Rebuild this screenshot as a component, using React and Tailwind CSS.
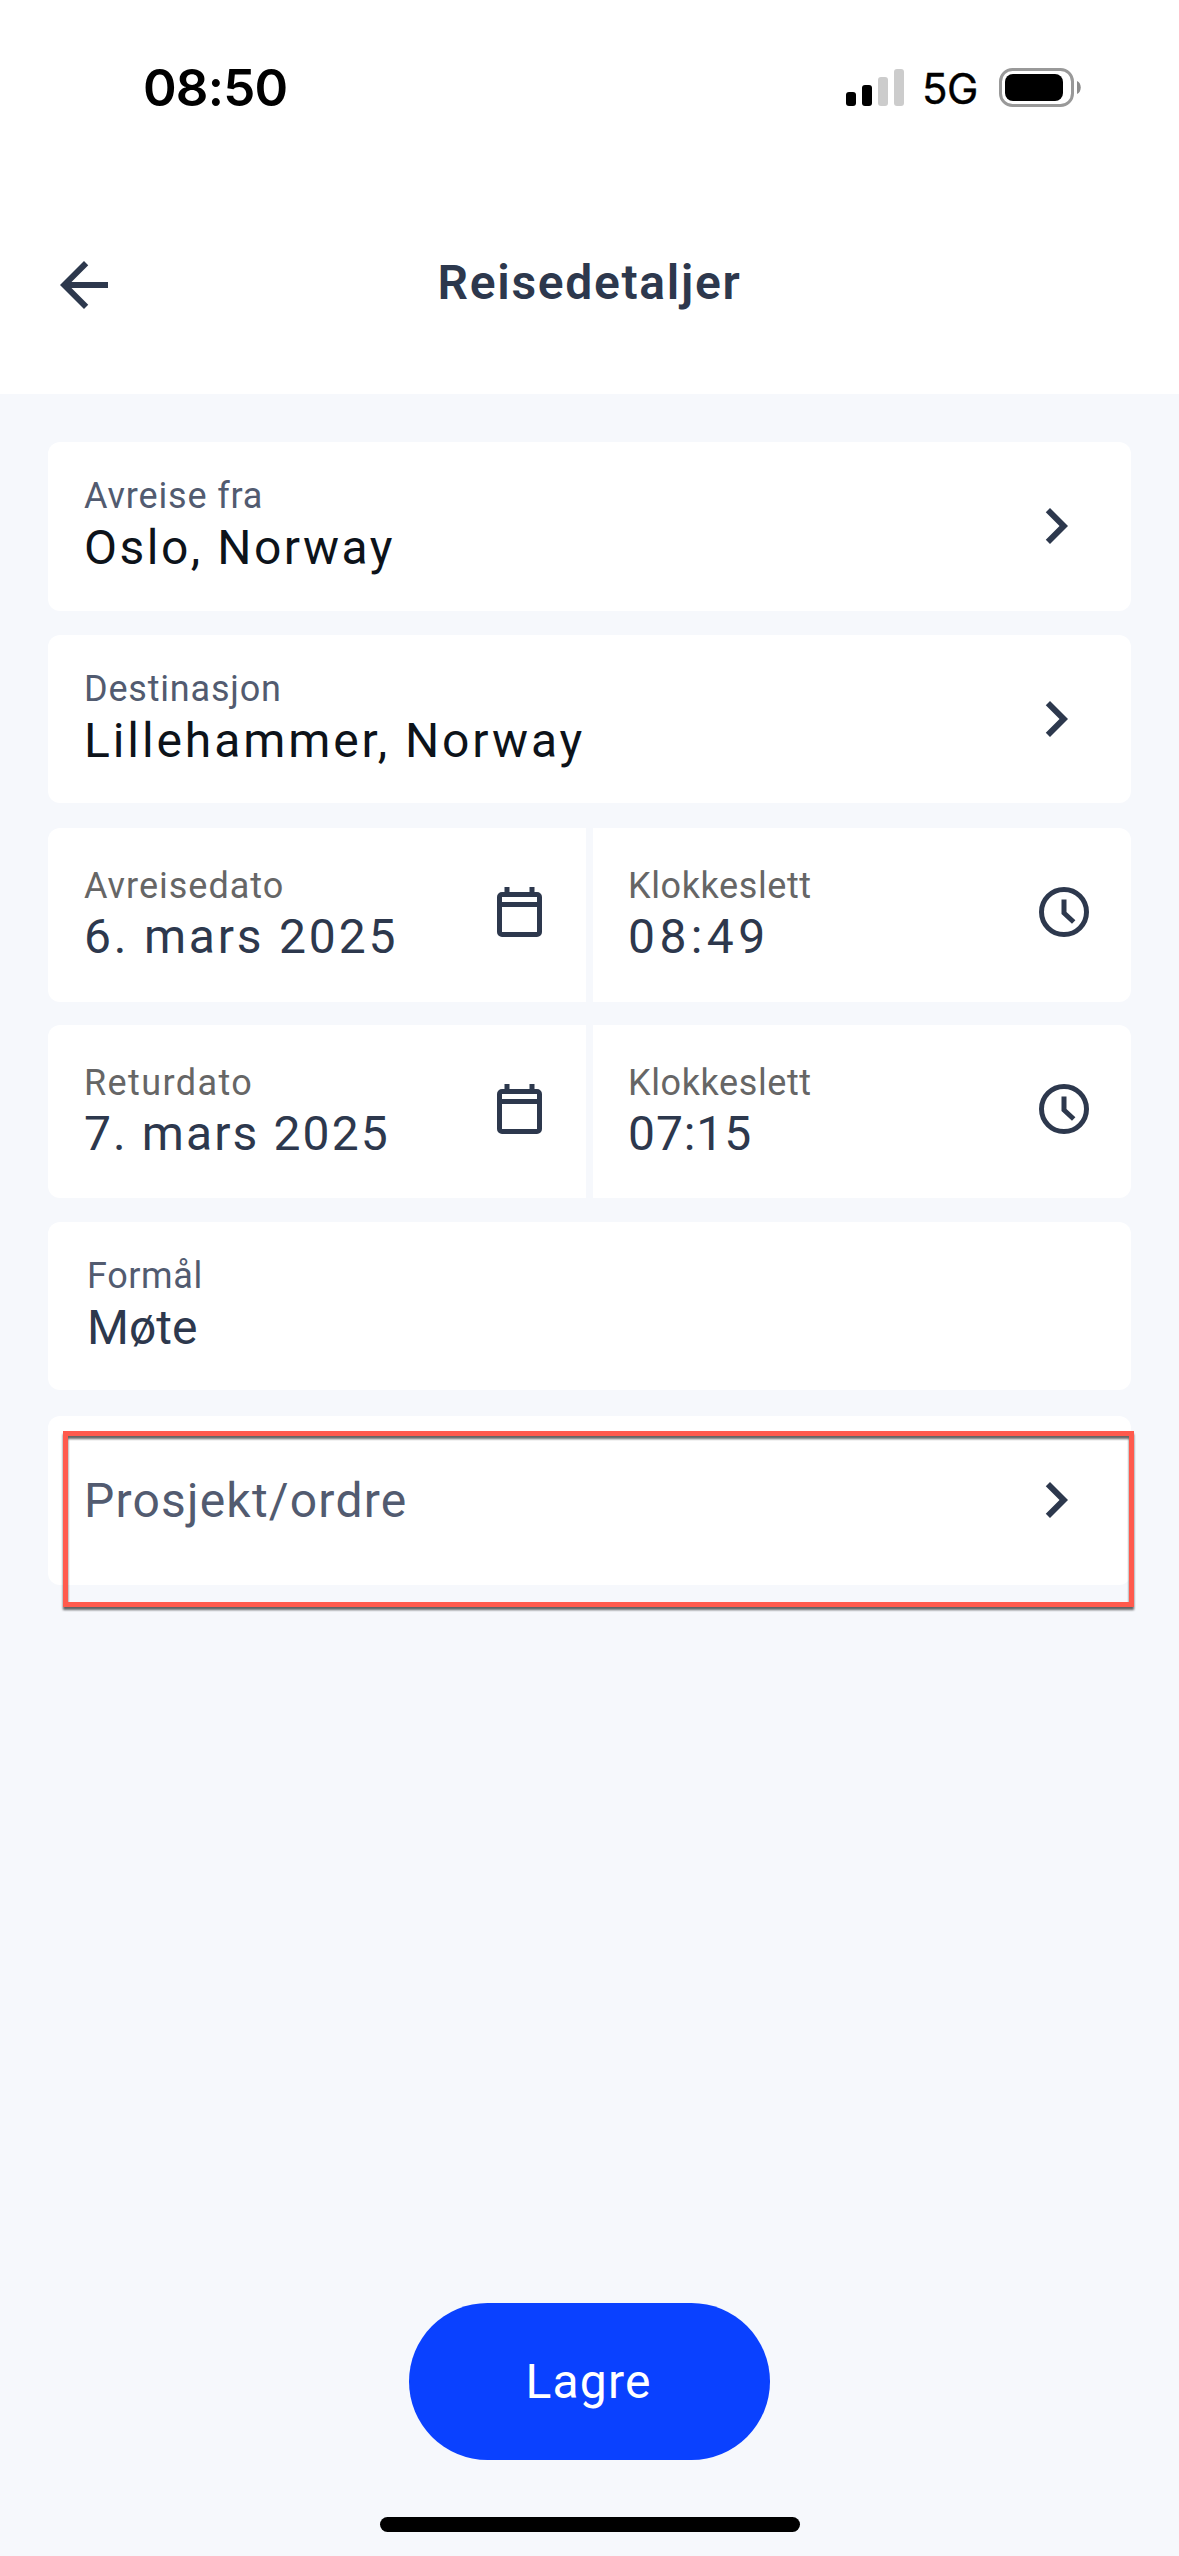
import { clsx } from 'clsx';

const ChevronIcon = () => (
  <svg viewBox="0 0 24 24" className="w-[72px] h-[72px] shrink-0 mb-px" fill="#2d384d">
    <path d="M10 6 8.59 7.41 13.17 12l-4.58 4.59L10 18l6-6z" />
  </svg>
);

const BackIcon = () => (
  <svg viewBox="0 0 24 24" className="w-[72px] h-[72px]" fill="#2d384d">
    <path d="M20 11H7.83l5.59-5.59L12 4l-8 8 8 8 1.41-1.41L7.83 13H20v-2z" />
  </svg>
);

const CalendarIcon = () => (
  <svg viewBox="0 0 45 50" className="w-[45px] h-[50px]" fill="#2d384d">
    <path
      fillRule="evenodd"
      d="M7.5 0h5v5h20V0h5v5H40a5 5 0 0 1 5 5v35a5 5 0 0 1-5 5H5a5 5 0 0 1-5-5V10a5 5 0 0 1 5-5h2.5zM5 10v5h35v-5zM5 20v25h35V20z"
    />
  </svg>
);

const ClockIcon = () => (
  <svg viewBox="0 0 50 50" className="w-[50px] h-[50px]" fill="none" stroke="#2d384d" strokeWidth="5">
    <circle cx="25" cy="25" r="22.5" />
    <path d="M25 12.5V26l9.7 9" />
  </svg>
);

const StatusBar = () => (
  <div className="h-[177px] flex items-start justify-between pl-[143px] pr-[98px] pt-[56px]">
    <span className="font-['Inter'] font-semibold text-[51px] leading-[64px] tracking-[-0.8px] text-black">08:50</span>
    <div className="flex items-center h-[63px]">
      <div className="flex items-end gap-[6px] h-[37px] mr-[18px]">
        <div className="w-[10px] h-[14px] rounded-[3px] bg-black" />
        <div className="w-[10px] h-[21px] rounded-[3px] bg-black" />
        <div className="w-[10px] h-[29px] rounded-[3px] bg-[#cccccc]" />
        <div className="w-[10px] h-[37px] rounded-[3px] bg-[#cccccc]" />
      </div>
      <span className="w-[77px] font-['Inter'] text-[42px] leading-[64px] tracking-[-0.5px] text-black pt-[3px] [-webkit-text-stroke:0.4px_black]">5G</span>
      <svg viewBox="0 0 82 39" className="w-[82px] h-[39px]">
        <rect x="1.5" y="1.5" width="72" height="36" rx="12" fill="none" stroke="#999999" strokeWidth="3" />
        <rect x="6" y="6" width="58" height="27" rx="8" fill="#000000" />
        <path d="M78 13c5 2 5 11 0 13z" fill="#8c8c8c" />
      </svg>
    </div>
  </div>
);

const Header = () => (
  <header className="h-[217px] grid grid-cols-[72px_1fr_72px] items-start px-12 pt-[72px]">
    <button aria-label="Tilbake">
      <BackIcon />
    </button>
    <h1 className="text-center text-[48px] leading-[68px] font-semibold tracking-[1.7px]">Reisedetaljer</h1>
  </header>
);

const Field = ({ label, value, className, labelClass, valueClass, chevron }) => (
  <div className={clsx('flex items-center bg-white rounded-xl pr-[39px]', className)}>
    <div className="flex-1 self-start pt-8">
      <p className={clsx('text-[36px] leading-[44px] text-[#525b70]', labelClass)}>{label}</p>
      <p className={clsx('text-[48px] leading-[59px]', valueClass)}>{value}</p>
    </div>
    {chevron && <ChevronIcon />}
  </div>
);

const PickerField = ({ label, value, className, labelClass, valueClass, icon }) => (
  <div className={clsx('flex items-start justify-between bg-white', className)}>
    <div className="pt-9">
      <p className={clsx('text-[36px] leading-[44px] text-[#666666]', labelClass)}>{label}</p>
      <p className={clsx('text-[48px] leading-[58px]', valueClass)}>{value}</p>
    </div>
    <div className="mt-[59px]">{icon}</div>
  </div>
);

const App = () => {
  return (
    <div className="w-[1179px] h-[2556px] flex flex-col overflow-hidden bg-[#f6f8fc] font-['Roboto',sans-serif] text-[#2d384d]">
      <div className="bg-white">
        <StatusBar />
        <Header />
      </div>

      <main className="flex-1 flex flex-col px-12 pt-12">
        <Field
          label="Avreise fra"
          value="Oslo, Norway"
          className="h-[169px] pl-[36px] mb-6"
          labelClass="tracking-[0.85px]"
          valueClass="tracking-[2.5px] text-[#0d131a]"
          chevron
        />
        <Field
          label="Destinasjon"
          value="Lillehammer, Norway"
          className="h-[168px] pl-[36px] mb-[25px]"
          labelClass="tracking-[0.8px]"
          valueClass="tracking-[2.9px] text-[#0d131a]"
          chevron
        />

        {/* Departure */}
        <div className="grid grid-cols-2 gap-[7px] h-[174px] mb-[23px]">
          <PickerField
            label="Avreisedato"
            value="6. mars 2025"
            className="rounded-l-xl pl-[36px] pr-[44px]"
            labelClass="tracking-[1px]"
            valueClass="tracking-[2.8px]"
            icon={<CalendarIcon />}
          />
          <PickerField
            label="Klokkeslett"
            value="08:49"
            className="rounded-r-xl pl-[35px] pr-[42px]"
            labelClass="tracking-[0.6px]"
            valueClass="tracking-[4.4px]"
            icon={<ClockIcon />}
          />
        </div>

        {/* Return */}
        <div className="grid grid-cols-2 gap-[7px] h-[173px] mb-6">
          <PickerField
            label="Returdato"
            value="7. mars 2025"
            className="rounded-l-xl pl-[36px] pr-[44px]"
            labelClass="tracking-[1.4px]"
            valueClass="tracking-[2.1px]"
            icon={<CalendarIcon />}
          />
          <PickerField
            label="Klokkeslett"
            value="07:15"
            className="rounded-r-xl pl-[35px] pr-[42px]"
            labelClass="tracking-[0.6px]"
            valueClass="tracking-[0.9px]"
            icon={<ClockIcon />}
          />
        </div>

        <Field
          label="Formål"
          value="Møte"
          className="h-[168px] pl-[39px] mb-[26px]"
          labelClass="tracking-[0.6px]"
          valueClass="tracking-[0.1px]"
        />

        <div className="relative h-[169px] flex items-center justify-between bg-white rounded-xl pl-[36px] pr-[39px]">
          <span className="text-[48px] leading-[60px] tracking-[1.2px] text-[#525b70]">Prosjekt/ordre</span>
          <ChevronIcon />
          {/* Highlight frame */}
          <div className="absolute left-[15px] top-[15px] w-[1071px] h-[176px] border-[5px] border-[#ff5a4d] drop-shadow-[0_3px_1px_rgba(0,0,0,0.6)]" />
        </div>

        <div className="mt-auto flex flex-col items-center pb-6">
          <button className="w-[361px] h-[157px] rounded-full bg-[#0a41ff] text-white text-[48px] tracking-[1.2px] pr-[2px] mb-[57px]">
            Lagre
          </button>
          <div className="w-[420px] h-[15px] rounded-full bg-black" />
        </div>
      </main>
    </div>
  );
};

export default App;
